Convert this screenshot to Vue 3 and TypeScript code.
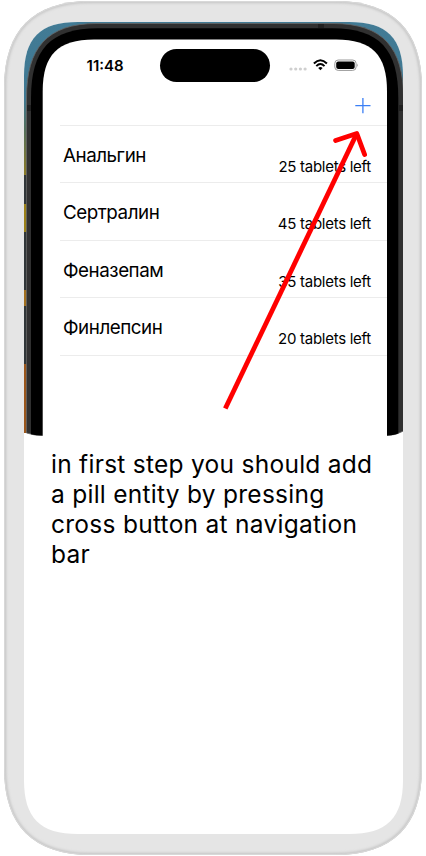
<script setup lang="ts">
interface Pill {
  name: string
  left: number
}

const pills: Pill[] = [
  { name: 'Анальгин', left: 25 },
  { name: 'Сертралин', left: 45 },
  { name: 'Феназепам', left: 35 },
  { name: 'Финлепсин', left: 20 },
]

const bodyPath =
  'M4 88C4 30 33 1 91 1H335C393 1 422 30 422 88V768C422 826 393 855 335 855H91C33 855 4 826 4 768Z'
</script>

<template>
  <main class="stage">
    <svg class="layer" viewBox="0 0 426 856" aria-hidden="true">
      <defs>
        <linearGradient id="wall" gradientUnits="userSpaceOnUse" x1="0" y1="22" x2="0" y2="175">
          <stop offset="0" stop-color="#427b95" />
          <stop offset=".5" stop-color="#3f7892" />
          <stop offset=".7" stop-color="#536f5c" />
          <stop offset="1" stop-color="#8b7a25" />
        </linearGradient>
        <clipPath id="body">
          <path :d="bodyPath" />
        </clipPath>
        <clipPath id="screen">
          <path d="M24 76C24 38 40 22 78 22H349C387 22 403 38 403 76V780C403 818 387 834 349 834H78C40 834 24 818 24 780Z" />
        </clipPath>
        <filter id="soft" x="-5%" y="-5%" width="110%" height="110%">
          <feGaussianBlur stdDeviation="1.8" />
        </filter>
      </defs>
      <g clip-path="url(#body)">
        <rect width="426" height="856" fill="#e5e5e5" />
        <path :d="bodyPath" fill="none" stroke="#bdbdbd" stroke-width="3.4" filter="url(#soft)" />
        <path :d="bodyPath" fill="none" stroke="#d8d8d8" stroke-width="2" />
      </g>
      <g clip-path="url(#screen)">
        <rect x="24" y="22" width="379" height="812" fill="#fff" />
        <rect x="24" y="22" width="379" height="153" fill="url(#wall)" />
        <rect x="24" y="175" width="6" height="258" fill="#303638" />
        <rect x="24" y="204" width="6" height="28" fill="#9b8118" />
        <rect x="24" y="290" width="6" height="16" fill="#a2701f" />
        <rect x="24" y="364" width="6" height="69" fill="#9a561b" />
        <path d="M26.5 98C26.5 48 47 23.5 97 23.5H333C383 23.5 403.5 48 403.5 98V431Q396 435.5 387 435.5H43Q34 435.5 26.5 433Z" fill="#303030" stroke="#666" stroke-width=".8" />
        <path d="M27 105h4v6h-4zM399 105h4v6h-4zM318 24h6v4h-6z" fill="#202020" />
        <path d="M31 98C31 50 50 28.3 98 28.3H332C380 28.3 398.3 50 398.3 98V433.5Q393 435.5 387 435.5H43Q36 435.5 31 434.2Z" fill="#000" />
        <path d="M42.7 91C42.7 55 58 39.5 94 39.5H336C372 39.5 387 55 387 91V437H42.7Z" fill="#fff" />
      </g>
    </svg>

    <div class="content">
      <header class="status">
        <time class="clock">11:48</time>
        <span class="island"></span>
        <svg class="signals" viewBox="0 0 72 16" aria-hidden="true">
          <g fill="#cfcfcf">
            <circle cx="3" cy="11" r="1.6" /><circle cx="7.7" cy="11" r="1.6" />
            <circle cx="12.4" cy="11" r="1.6" /><circle cx="17.1" cy="11" r="1.6" />
          </g>
          <g fill="none" stroke="#000" stroke-width="2">
            <path d="M25.9 5.5Q32.4 -1 38.9 5.5" />
            <path d="M28.3 8.1Q32.4 4 36.5 8.1" />
          </g>
          <path d="M30.2 9.9Q32.4 8 34.6 9.9L32.4 12.2Z" />
          <rect x="46.8" y="2" width="21.3" height="10.4" rx="3.4" fill="none" stroke="#999" />
          <rect x="48.2" y="3.4" width="18.5" height="7.6" rx="2.1" />
          <path d="M69.2 5.4Q70.8 7.2 69.2 9Z" fill="#999" />
        </svg>
      </header>

      <nav class="toolbar">
        <button class="add" type="button" aria-label="Add">
          <svg viewBox="0 0 16 16"><path d="M7.9 0V15.3M.3 7.6H15.5" /></svg>
        </button>
      </nav>

      <ul class="list">
        <li v-for="pill in pills" :key="pill.name" class="row">
          <span class="name">{{ pill.name }}</span>
          <span class="count">{{ pill.left }} tablets left</span>
        </li>
      </ul>

      <p class="hint">in first step you should add a pill entity by pressing cross button at navigation bar</p>
    </div>

    <svg class="layer arrow" viewBox="0 0 426 856" aria-hidden="true">
      <path d="M225.3 408.5L356.8 133.5" />
      <path d="M335.6 140.5L356.8 133.5L364.6 154.5" stroke-linecap="round" stroke-linejoin="round" />
    </svg>
  </main>
</template>

<style>
body {
  margin: 0;
  background: #fff;
}
</style>

<style scoped>
.stage {
  display: grid;
  width: 426px;
  height: 856px;
  overflow: hidden;
  font-family: Inter, 'Liberation Sans', sans-serif;
  color: #000;
}

.layer,
.content {
  grid-area: 1 / 1;
  width: 426px;
  height: 856px;
}

.layer {
  display: block;
}

.content {
  box-sizing: border-box;
  padding: 49px 39px 0 43px;
  z-index: 1;
}

.arrow {
  z-index: 2;
  fill: none;
  stroke: #f00;
  stroke-width: 4.8;
  pointer-events: none;
}

.status {
  display: grid;
  grid-template-columns: 117px 110px 1fr;
  align-items: center;
  height: 33px;
}

.clock {
  padding-left: 43.6px;
  font-size: 15px;
  font-weight: 600;
  line-height: 20px;
}

.island {
  height: 33px;
  border-radius: 17px;
  background: #000;
}

.signals {
  width: 72px;
  height: 16px;
  margin-left: 18px;
}

.toolbar {
  display: flex;
  justify-content: flex-end;
  align-items: center;
  height: 43px;
  padding: 5px 16px 0 0;
  box-sizing: border-box;
}

.add {
  display: block;
  width: 16px;
  height: 16px;
  padding: 0;
  border: 0;
  background: none;
}

.add svg {
  display: block;
  width: 16px;
  height: 16px;
  fill: none;
  stroke: #3b7ff5;
  stroke-width: 1.3;
}

.list {
  margin: 0 0 0 17px;
  padding: 0;
  list-style: none;
  border-top: 1px solid #ececec;
}

.row {
  display: flex;
  justify-content: space-between;
  box-sizing: border-box;
  height: 57.4px;
  padding: 0 16px 0 3px;
  border-bottom: 1px solid #ececec;
}

.name {
  padding-top: 18px;
  font-size: 18.8px;
  line-height: 24px;
  letter-spacing: -0.46px;
}

.count {
  padding-top: 31px;
  font-size: 15px;
  line-height: 20px;
  letter-spacing: -0.27px;
}

.hint {
  width: 336px;
  margin: 93px 0 0 8px;
  font-size: 24.5px;
  line-height: 30px;
  letter-spacing: 0.27px;
}
</style>
